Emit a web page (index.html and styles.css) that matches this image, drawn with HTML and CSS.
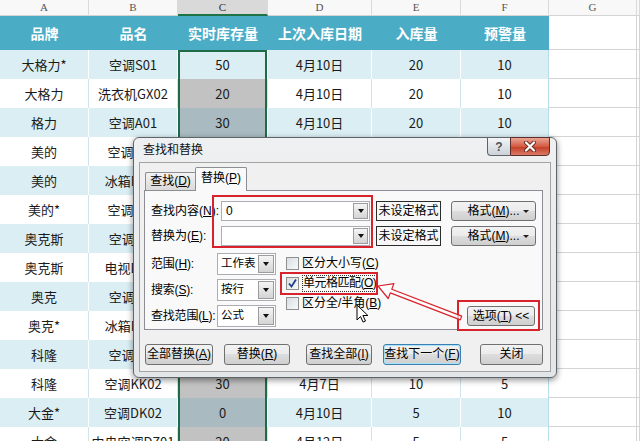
FILE: index.html
```html
<!DOCTYPE html>
<html>
<head>
  <title>查找和替换</title>
  <link rel="stylesheet" href="styles.css">
</head>
<body>
  <div class="sheet">
    <div class="row letters">
      <div>A</div><div>B</div><div class="cur">C</div><div>D</div><div>E</div><div>F</div><div>G</div><div></div>
    </div>
    <div class="row head">
      <div>品牌</div><div>品名</div><div>实时库存量</div><div>上次入库日期</div><div>入库量</div><div class="last">预警量</div><div class="g"></div><div class="g"></div>
    </div>
    <div class="row data band">
      <div>大格力*</div><div>空调S01</div><div class="c top">50</div><div>4月10日</div><div>20</div><div class="last">10</div><div class="g"></div><div class="g"></div>
    </div>
    <div class="row data plain">
      <div>大格力</div><div>洗衣机GX02</div><div class="c sel">20</div><div>4月10日</div><div>20</div><div class="last">10</div><div class="g"></div><div class="g"></div>
    </div>
    <div class="row data band">
      <div>格力</div><div>空调A01</div><div class="c sel">30</div><div>4月10日</div><div>20</div><div class="last">10</div><div class="g"></div><div class="g"></div>
    </div>
    <div class="row data plain">
      <div>美的</div><div>空调M01</div><div class="c sel">20</div><div>4月10日</div><div>20</div><div class="last">10</div><div class="g"></div><div class="g"></div>
    </div>
    <div class="row data band">
      <div>美的</div><div>冰箱BX01</div><div class="c sel">10</div><div>4月10日</div><div>10</div><div class="last">5</div><div class="g"></div><div class="g"></div>
    </div>
    <div class="row data plain">
      <div>美的*</div><div>空调M02</div><div class="c sel">0</div><div>4月10日</div><div>10</div><div class="last">5</div><div class="g"></div><div class="g"></div>
    </div>
    <div class="row data band">
      <div>奥克斯</div><div>空调A02</div><div class="c sel">20</div><div>4月10日</div><div>20</div><div class="last">10</div><div class="g"></div><div class="g"></div>
    </div>
    <div class="row data plain">
      <div>奥克斯</div><div>电视DS01</div><div class="c sel">10</div><div>4月10日</div><div>10</div><div class="last">5</div><div class="g"></div><div class="g"></div>
    </div>
    <div class="row data band">
      <div>奥克</div><div>空调A03</div><div class="c sel">0</div><div>4月10日</div><div>10</div><div class="last">5</div><div class="g"></div><div class="g"></div>
    </div>
    <div class="row data plain">
      <div>奥克*</div><div>冰箱BX02</div><div class="c sel">20</div><div>4月10日</div><div>20</div><div class="last">10</div><div class="g"></div><div class="g"></div>
    </div>
    <div class="row data band">
      <div>科隆</div><div>空调K01</div><div class="c sel">10</div><div>4月10日</div><div>10</div><div class="last">5</div><div class="g"></div><div class="g"></div>
    </div>
    <div class="row data plain">
      <div>科隆</div><div>空调KK02</div><div class="c sel">30</div><div>4月7日</div><div>10</div><div class="last">5</div><div class="g"></div><div class="g"></div>
    </div>
    <div class="row data band">
      <div>大金*</div><div>空调DK02</div><div class="c sel">0</div><div>4月10日</div><div>5</div><div class="last">10</div><div class="g"></div><div class="g"></div>
    </div>
    <div class="row data plain">
      <div>大金</div><div>中央空调DZ01</div><div class="c sel">20</div><div>4月12日</div><div>5</div><div class="last">5</div><div class="g"></div><div class="g"></div>
    </div>
  </div>

  <!-- find & replace dialog -->
  <div class="dialog">
    <div class="titlebar">查找和替换</div>
    <div class="caption">
      <span class="help">?</span>
      <span class="close">
        <svg width="14" height="11" viewBox="0 0 14 11"><path d="M3 1.5 L11 9.5 M11 1.5 L3 9.5" stroke="#6a2a20" stroke-width="4" stroke-linecap="round"/><path d="M3 1.5 L11 9.5 M11 1.5 L3 9.5" stroke="#fff" stroke-width="2.2" stroke-linecap="round"/></svg>
      </span>
    </div>
    <div class="client">
      <div class="tabs">
        <div class="tab">查找(<u>D</u>)</div>
        <div class="tab on">替换(<u>P</u>)</div>
      </div>
      <div class="panel">
        <div class="line">
          <label>查找内容(<u>N</u>):</label>
          <div class="combo wide"><span>0</span><i></i></div>
          <div class="fmt">未设定格式</div>
          <div class="btn menu">格式(<u>M</u>)...</div>
        </div>
        <div class="line">
          <label>替换为(<u>E</u>):</label>
          <div class="combo wide"><span></span><i></i></div>
          <div class="fmt">未设定格式</div>
          <div class="btn menu">格式(<u>M</u>)...</div>
        </div>
        <div class="opts">
          <div class="pick">
            <div class="opt"><label>范围(<u>H</u>):</label><div class="combo small"><span>工作表</span><i></i></div></div>
            <div class="opt"><label>搜索(<u>S</u>):</label><div class="combo small"><span>按行</span><i></i></div></div>
            <div class="opt"><label>查找范围(<u>L</u>):</label><div class="combo small"><span>公式</span><i></i></div></div>
          </div>
          <div class="checks">
            <div class="chk"><span class="box"></span>区分大小写(<u>C</u>)</div>
            <div class="chk">
              <span class="box">
                <svg width="11" height="11" viewBox="0 0 11 11"><path d="M2 5.5 L4.5 8.5 L9 1.5" fill="none" stroke="#1f3f8c" stroke-width="1.8"/></svg>
              </span>
              <span class="focus">单元格匹配(<u>O</u>)</span>
            </div>
            <div class="chk"><span class="box"></span>区分全/半角(<u>B</u>)</div>
          </div>
          <div class="btn opt-btn">选项(<u>T</u>) &lt;&lt;</div>
        </div>
      </div>
      <div class="actions">
        <div class="btn w1">全部替换(<u>A</u>)</div>
        <div class="btn w2">替换(<u>R</u>)</div>
        <div class="btn w3">查找全部(<u>I</u>)</div>
        <div class="btn w4 default">查找下一个(<u>F</u>)</div>
        <div class="btn w5">关闭</div>
      </div>
    </div>
  </div>

  <!-- red annotations and mouse pointer -->
  <svg class="marks" width="640" height="441" viewBox="0 0 640 441">
    <g fill="none" stroke="#d8232c" stroke-width="2">
      <rect x="213" y="196" width="159" height="51"/>
      <rect x="281" y="273" width="96" height="21"/>
      <rect x="458" y="301" width="81" height="29"/>
    </g>
    <polygon points="461.7,316.1 391.8,289.2 393.9,283.6 378,286 388.2,298.5 390.3,292.9 460.3,319.9"
             fill="rgba(255,255,255,0.7)" stroke="#d8232c" stroke-width="1.2" stroke-linejoin="round"/>
    <path d="M357 305 v15 l3.5 -3.5 l2.6 5.6 l2.4 -1.1 l-2.6 -5.5 h5 z" fill="#fff" stroke="#000" stroke-width="1"/>
  </svg>
</body>
</html>
```

FILE: styles.css
```css
body {
  margin: 0;
  width: 640px;
  height: 441px;
  overflow: hidden;
  position: relative;
  background: #fff;
  font-family: "Noto Sans CJK SC", sans-serif;
}

/* spreadsheet */
.row {
  display: grid;
  grid-template-columns: 89px 89px 90px 104px 89px 88px 88px 3px;
  box-sizing: border-box;
}

.row > div {
  display: flex;
  align-items: center;
  justify-content: center;
  box-sizing: border-box;
  overflow: hidden;
  white-space: nowrap;
  line-height: 1;
}

.letters {
  height: 16px;
  background: #f8f8f8;
  font: 11px "Liberation Serif", serif;
  color: #555;
}

.letters > div {
  border-right: 1px solid #dadada;
  border-bottom: 1px solid #d4d4d4;
}

.letters .cur {
  background: #d9d9d9;
  border-bottom: 2px solid #217346;
  color: #333;
}

.head {
  height: 34px;
  font-size: 14px;
  font-weight: bold;
  color: #fff;
}

.head > div {
  background: #4bacc6;
}

.data {
  height: 29px;
  font-size: 13px;
  color: #1a1a1a;
}

.data.band > div {
  background: #daeef3;
  border-right: 1px solid #fff;
}

.data.plain > div {
  background: #fff;
  border-right: 1px solid #cfe5eb;
}

.data .last {
  border-right: 1px solid #b7dde8 !important;
}

.row > .g {
  background: #fff !important;
  border-right: 1px solid #d4d4d4 !important;
  border-bottom: 1px solid #d4d4d4;
}

.data .c {
  box-shadow: inset 2px 0 #1f6b45, inset -2px 0 #1f6b45;
}

.data .c.top {
  box-shadow: inset 2px 0 #1f6b45, inset -2px 0 #1f6b45, inset 0 2px #1f6b45;
}

.data.plain .c.sel {
  background: #c2c2c2;
}

.data.band .c.sel {
  background: #a9bbc0;
}

/* dialog */
.dialog {
  position: absolute;
  left: 133px;
  top: 137px;
  width: 424px;
  height: 241px;
  box-sizing: border-box;
  border: 1px solid #5f6469;
  border-radius: 6px;
  padding: 0 5px 5px 5px;
  background: linear-gradient(#eef0f2, #e3e6e9);
  box-shadow: 0 2px 6px rgba(0, 0, 0, 0.45);
  font: 12px "Liberation Sans", "Noto Sans CJK SC", sans-serif;
  color: #000;
  line-height: 1.2;
  white-space: nowrap;
}

.titlebar {
  height: 24px;
  display: flex;
  align-items: center;
  padding-left: 4px;
  color: #111;
}

.caption {
  position: absolute;
  top: -1px;
  right: 6px;
  display: flex;
  height: 19px;
}

.caption span {
  box-sizing: border-box;
  display: flex;
  align-items: center;
  justify-content: center;
}

.help {
  width: 23px;
  border: 1px solid #5e6469;
  border-right: none;
  border-radius: 0 0 0 4px;
  background: linear-gradient(#f3f5f7, #ccd2d8);
  font: bold 12px "Liberation Sans", sans-serif;
  color: #4a5058;
}

.close {
  width: 40px;
  border: 1px solid #5e2d28;
  border-radius: 0 0 4px 0;
  background: linear-gradient(#eaa593, #d45a42 50%, #c23b23 50%, #d97a66);
}

.client {
  height: 210px;
  box-sizing: border-box;
  border: 1px solid #a3a3a3;
  background: #f0f0f0;
  padding: 4px 0 0 4px;
}

.tabs {
  display: flex;
  align-items: flex-end;
  height: 24px;
  margin-left: 1px;
  margin-bottom: -1px;
  position: relative;
  z-index: 1;
}

.tab {
  width: 50px;
  height: 19px;
  box-sizing: border-box;
  border: 1px solid #8c8e94;
  border-right: none;
  border-bottom: 1px solid #8c8e94;
  border-radius: 2px 0 0 0;
  background: linear-gradient(#f3f3f3, #dadada);
  display: flex;
  align-items: center;
  justify-content: center;
}

.tab.on {
  width: 52px;
  height: 24px;
  border-right: 1px solid #8c8e94;
  border-bottom: none;
  border-radius: 2px 2px 0 0;
  background: #f9f9f9;
  align-items: flex-start;
  padding-top: 3px;
}

.panel {
  width: 399px;
  height: 140px;
  box-sizing: border-box;
  border: 1px solid #8c8e94;
  background: #f9f9f9;
  padding: 10px 6px 2px 6px;
}

.line {
  display: flex;
  align-items: center;
  height: 20px;
}

.line + .line {
  margin-top: 5px;
}

.line label {
  width: 70px;
}

.combo {
  box-sizing: border-box;
  height: 20px;
  border: 1px solid #abadb3;
  background: #fff;
  display: flex;
  align-items: center;
  justify-content: space-between;
  padding-left: 4px;
}

.combo.wide {
  width: 149px;
}

.combo i {
  width: 15px;
  height: 16px;
  margin-right: 1px;
  box-sizing: border-box;
  border: 1px solid #9c9c9c;
  background: linear-gradient(#f5f5f5, #d4d4d4);
  display: flex;
  align-items: center;
  justify-content: center;
}

.combo i::after {
  content: "";
  border-left: 3.5px solid transparent;
  border-right: 3.5px solid transparent;
  border-top: 4px solid #111;
}

.fmt {
  margin-left: 6px;
  width: 65px;
  height: 20px;
  box-sizing: border-box;
  border: 1px solid #2b2b2b;
  background: #f7f7f7;
  display: flex;
  align-items: center;
  justify-content: center;
}

.btn {
  box-sizing: border-box;
  height: 20px;
  border: 1px solid #707070;
  border-radius: 3px;
  background: linear-gradient(#f2f2f2, #ebebeb 50%, #dddddd 50%, #cfcfcf);
  display: flex;
  align-items: center;
  justify-content: center;
}

.menu {
  margin-left: 10px;
  width: 85px;
  position: relative;
}

.menu::after {
  content: "";
  position: absolute;
  right: 6px;
  top: 8px;
  border-left: 3px solid transparent;
  border-right: 3px solid transparent;
  border-top: 3px solid #222;
}

.opts {
  display: flex;
  margin-top: 7px;
  height: 74px;
}

.pick {
  display: flex;
  flex-direction: column;
  gap: 4px;
}

.opt {
  display: flex;
  align-items: center;
  height: 22px;
}

.opt label {
  width: 66px;
  letter-spacing: -0.2px;
}

.combo.small {
  width: 59px;
  height: 22px;
  padding-left: 3px;
  font-size: 11.5px;
}

.combo.small i {
  width: 16px;
  height: 18px;
}

.checks {
  margin-left: 9px;
  display: flex;
  flex-direction: column;
}

.chk {
  height: 20px;
  display: flex;
  align-items: center;
}

.box {
  width: 13px;
  height: 13px;
  box-sizing: border-box;
  margin: 0 3px 0 1px;
  border: 1px solid #8f8f8f;
  background: linear-gradient(135deg, #d8dde3, #fafafa);
  display: flex;
  align-items: center;
  justify-content: center;
}

.focus {
  border: 1px dotted #333;
  line-height: 15px;
  letter-spacing: -0.5px;
}

.opt-btn {
  width: 68px;
  margin-left: auto;
  margin-right: 1px;
  margin-bottom: 1px;
  align-self: flex-end;
}

.actions {
  display: flex;
  margin-top: 14px;
  margin-left: 1px;
}

.actions .btn {
  height: 21px;
}

.w1 { width: 68px; }
.w2 { width: 66px; margin-left: 11px; }
.w3 { width: 66px; margin-left: 16px; }
.w4 { width: 78px; margin-left: 11px; }
.w5 { width: 63px; margin-left: 19px; }

.btn.default {
  border-color: #3c7fb1;
  box-shadow: inset 0 0 0 1px #a8e2fd;
}

.marks {
  position: absolute;
  left: 0;
  top: 0;
  pointer-events: none;
}
```
